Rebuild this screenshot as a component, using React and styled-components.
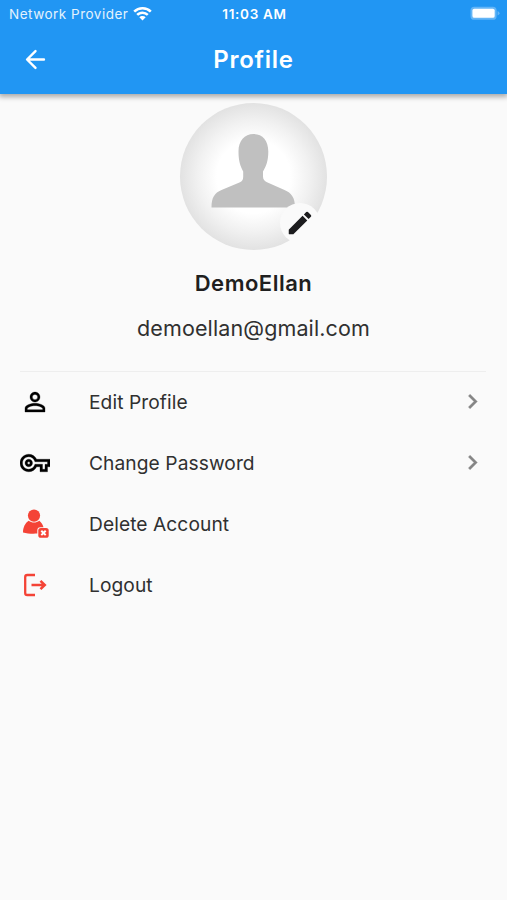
import styled, { createGlobalStyle } from "styled-components";

const GlobalStyle = createGlobalStyle`
  * {
    box-sizing: border-box;
  }
  body {
    margin: 0;
    background: #fafafa;
    font-family: Inter, "Liberation Sans", sans-serif;
  }
`;

const Screen = styled.main`
  height: 900px;
  overflow: hidden;
  color: #303030;
`;

const TopArea = styled.header`
  height: 94px;
  background: #2196f3;
  color: #fff;
  box-shadow: 0 2px 5px 1px rgba(0, 0, 0, 0.32);
`;

const StatusBar = styled.div`
  display: grid;
  grid-template-columns: 1fr auto 1fr;
  align-items: center;
  height: 26px;
  padding: 1px 7px 0 9px;
  font-size: 13.5px;
`;

const Carrier = styled.div`
  display: flex;
  align-items: center;
  gap: 5px;
  color: #e3f2fd;
  letter-spacing: 0.5px;
  white-space: nowrap;
`;

const Clock = styled.div`
  font-weight: 600;
  font-size: 13.5px;
  letter-spacing: 0.7px;
`;

const BatteryIcon = styled.svg`
  justify-self: end;
`;

const AppBar = styled.div`
  display: grid;
  grid-template-columns: 50px 1fr 50px;
  align-items: center;
  height: 67px;
`;

const BackButton = styled.button`
  display: flex;
  padding: 0;
  margin-left: 21px;
  border: 0;
  background: none;
  color: inherit;
`;

const Title = styled.h1`
  margin: 1px 0 0;
  text-align: center;
  font-size: 24px;
  font-weight: 600;
  line-height: 30px;
  letter-spacing: 0.75px;
`;

const ProfileInfo = styled.section`
  display: flex;
  flex-direction: column;
  align-items: center;
  height: 277px;
  padding-top: 9px;
`;

const Avatar = styled.div`
  position: relative;
  width: 147px;
  height: 147px;
  border-radius: 50%;
  background: radial-gradient(
    circle closest-side,
    #fff 0 50%,
    #f1f1f1 76%,
    #e2e2e2 100%
  );
`;

const EditBadge = styled.button`
  position: absolute;
  right: 7px;
  bottom: 7px;
  display: flex;
  align-items: center;
  justify-content: center;
  width: 40px;
  height: 40px;
  padding: 0;
  border: 0;
  border-radius: 50%;
  background: #fafafa;
  color: #1c1c1e;
`;

const Name = styled.h2`
  margin: 19px 0 0;
  color: #1f1f1f;
  font-size: 22px;
  font-weight: 600;
  line-height: 28px;
  letter-spacing: 0.5px;
`;

const Email = styled.p`
  margin: 17px 0 0;
  font-size: 21.5px;
  line-height: 28px;
  letter-spacing: 0.12px;
`;

const Menu = styled.ul`
  margin: 0 21px 0 20px;
  padding: 0;
  list-style: none;
`;

const MenuItem = styled.li`
  display: grid;
  grid-template-columns: 30px 1fr 29px;
  column-gap: 39px;
  align-items: center;
  height: 61px;

  &:first-child {
    box-shadow: inset 0 1px #eeeeee;
  }
`;

const MenuIcon = styled.span`
  display: flex;
  justify-content: center;
  color: ${(props) => (props.$danger ? "#f44336" : "#000")};
`;

const MenuText = styled.span`
  font-size: 19.2px;
  letter-spacing: 0.07px;
`;

const ArrowIcon = styled.svg`
  margin-left: 1px;
  fill: #858585;
  stroke: #858585;
  stroke-width: 0.3;
`;

const WifiIcon = () => (
  <svg width="19" height="14" viewBox="0 0 19 14" fill="#fff">
    <path d="M9.5 0C5.9 0 2.6 1.4.3 3.7l1.8 1.8a10.4 10.4 0 0 1 14.8 0l1.8-1.8A13 13 0 0 0 9.5 0z" />
    <path d="M9.5 4.5c-2.4 0-4.6 1-6.2 2.5l1.8 1.8a6.3 6.3 0 0 1 8.8 0L15.7 7a8.9 8.9 0 0 0-6.2-2.5z" />
    <path d="M9.5 9c-1.2 0-2.4.5-3.2 1.2l3.2 3.3 3.2-3.3A4.7 4.7 0 0 0 9.5 9z" />
  </svg>
);

const Silhouette = () => (
  <svg width="147" height="147" viewBox="0 0 147 147" fill="#c0c0c0">
    <path d="M73.5 31c-9 0-15 6.5-15 17.5 0 9.5 2 15 4.7 20v5c0 2.8-.7 4.500-3.200 5.700L41.500 87c-7 3-10 7.500-10 17.500h83.500c0-10-3.500-14.500-10.500-17.500L87 79.200c-2.500-1.200-4-2.900-4-5.700v-5c3-5 5.300-10.500 5.300-20C88.300 37.500 82.500 31 73.500 31z" />
  </svg>
);

const PencilIcon = () => (
  <svg width="30" height="30" viewBox="0 0 24 24" fill="currentColor">
    <path d="M3 17.46v3.04c0 .28.22.5.5.5h3.04c.13 0 .26-.05.35-.15L17.81 9.94l-3.75-3.75L3.15 17.1c-.1.1-.15.22-.15.36zM20.71 7.04a1 1 0 0 0 0-1.41l-2.34-2.34a1 1 0 0 0-1.41 0l-1.83 1.83 3.75 3.75 1.83-1.83z" />
  </svg>
);

const PersonIcon = () => (
  <svg
    width="30"
    height="30"
    viewBox="0 0 24 24"
    fill="currentColor"
    stroke="currentColor"
    strokeWidth="0.25"
  >
    <path d="M12 5.9a2.1 2.1 0 1 1 0 4.2 2.1 2.1 0 0 1 0-4.2m0 9c2.97 0 6.1 1.46 6.1 2.1v1.1H5.9V17c0-.64 3.13-2.1 6.1-2.1M12 4C9.79 4 8 5.79 8 8s1.79 4 4 4 4-1.79 4-4-1.79-4-4-4zm0 9c-2.67 0-8 1.34-8 4v3h16v-3c0-2.66-5.33-4-8-4z" />
  </svg>
);

const KeyIcon = () => (
  <svg
    width="30"
    height="30"
    viewBox="0 0 24 24"
    fill="currentColor"
    stroke="currentColor"
    strokeWidth="0.25"
  >
    <path d="M22 19h-6v-4h-2.68c-1.14 2.42-3.6 4-6.32 4-3.86 0-7-3.14-7-7s3.14-7 7-7c2.72 0 5.17 1.58 6.32 4H24v6h-2v4zm-4-2h2v-4h2v-2H11.94l-.23-.67C11.01 8.34 9.11 7 7 7c-2.76 0-5 2.24-5 5s2.24 5 5 5c2.11 0 4.01-1.34 4.71-3.33l.23-.67H18v4zM7 15c-1.65 0-3-1.35-3-3s1.35-3 3-3 3 1.35 3 3-1.35 3-3 3zm0-4c-.55 0-1 .45-1 1s.45 1 1 1 1-.45 1-1-.45-1-1-1z" />
  </svg>
);

const DeleteIcon = () => (
  <svg width="30" height="30" viewBox="0 0 30 30" fill="currentColor">
    <circle cx="14" cy="6.6" r="6.1" />
    <path d="M8.7 11.7c3 2.4 7.6 2.400 10.600 0 2.200 1.700 3.600 4 4.200 6.500h-3.200c-2 0-3 1.100-3 3.100v3.200c-5 .4-10.300 0-14.300-1.100.1-5 2-9.400 5.700-11.700z" />
    <rect x="18.300" y="19" width="10.400" height="9.800" rx="2.600" />
    <path
      d="M21.300 21.800l4.400 4.300M25.700 21.800l-4.400 4.300"
      stroke="#fff"
      strokeWidth="2"
    />
  </svg>
);

const LogoutIcon = () => (
  <svg
    width="30"
    height="30"
    viewBox="0 0 30 30"
    fill="none"
    stroke="currentColor"
    strokeWidth="2.3"
  >
    <path d="M15 5H7.300Q5.200 5 5.200 7.100v15.800Q5.200 25 7.300 25H15" />
    <path d="M11.500 15h13M20.500 10.800l4.300 4.200-4.300 4.200" strokeWidth="2.500" />
  </svg>
);

const menuLists = [
  { text: "Edit Profile", icon: <PersonIcon />, arrow: true },
  { text: "Change Password", icon: <KeyIcon />, arrow: true },
  { text: "Delete Account", icon: <DeleteIcon />, danger: true },
  { text: "Logout", icon: <LogoutIcon />, danger: true },
];

const App = () => {
  return (
    <>
      <GlobalStyle />
      <Screen>
        <TopArea>
          <StatusBar>
            <Carrier>
              Network Provider
              <WifiIcon />
            </Carrier>
            <Clock>11:03 AM</Clock>
            <BatteryIcon width="30" height="15" viewBox="0 0 31 15">
              <rect x="0.5" y="0.5" width="27" height="13.5" rx="4" fill="#64b5f6" />
              <rect x="2.5" y="2.5" width="23" height="9.5" rx="2" fill="#fff" />
              <path d="M28.5 5v4.5q2-.7 2-2.25T28.5 5z" fill="#64b5f6" />
            </BatteryIcon>
          </StatusBar>
          <AppBar>
            <BackButton aria-label="Back">
              <svg
                width="29"
                height="29"
                viewBox="0 0 24 24"
                fill="none"
                stroke="currentColor"
                strokeWidth="2"
                strokeLinecap="round"
                strokeLinejoin="round"
              >
                <path d="M19 12H5.300M12 5l-7 7 7 7" />
              </svg>
            </BackButton>
            <Title>Profile</Title>
          </AppBar>
        </TopArea>
        <ProfileInfo>
          <Avatar>
            <Silhouette />
            <EditBadge aria-label="Change photo">
              <PencilIcon />
            </EditBadge>
          </Avatar>
          <Name>DemoEllan</Name>
          <Email>demoellan@gmail.com</Email>
        </ProfileInfo>
        <Menu>
          {menuLists.map((item, i) => (
            <MenuItem key={i}>
              <MenuIcon $danger={item.danger}>{item.icon}</MenuIcon>
              <MenuText>{item.text}</MenuText>
              {item.arrow && (
                <ArrowIcon width="29" height="29" viewBox="0 0 24 24">
                  <path d="M10 6 8.59 7.41 13.17 12l-4.58 4.59L10 18l6-6z" />
                </ArrowIcon>
              )}
            </MenuItem>
          ))}
        </Menu>
      </Screen>
    </>
  );
};

export default App;
